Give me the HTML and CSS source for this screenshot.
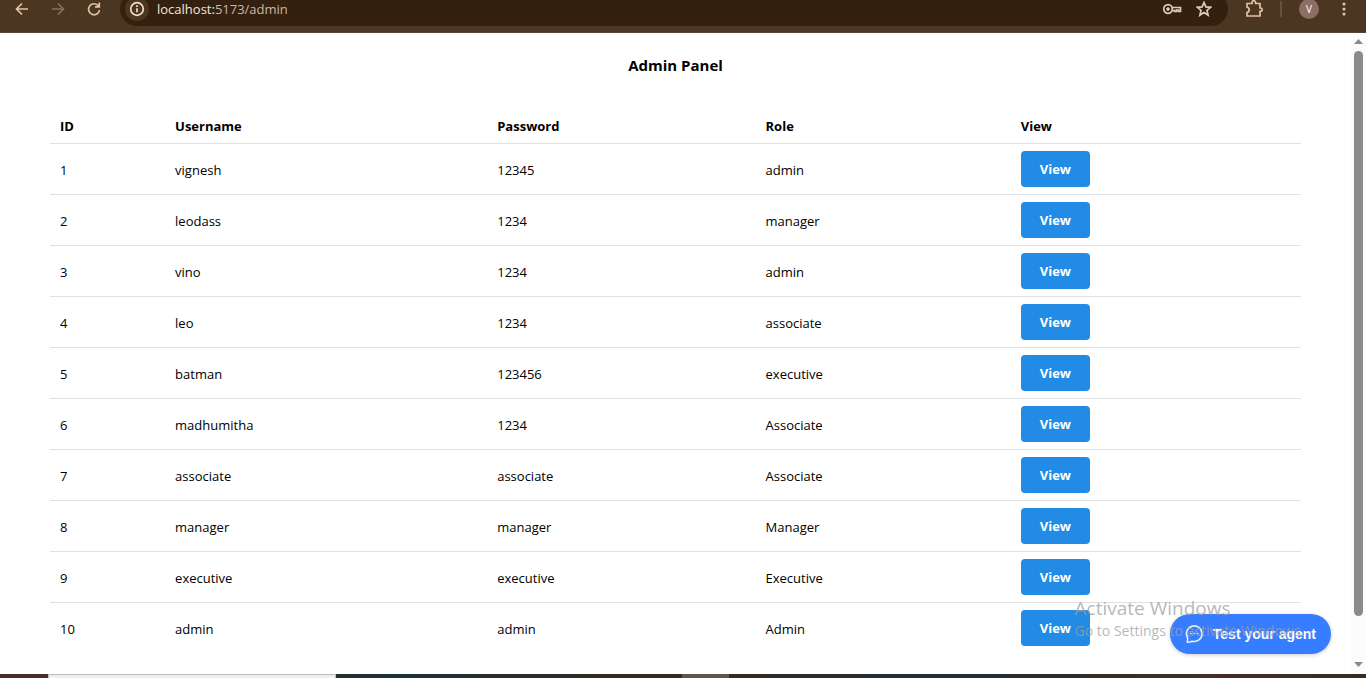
FILE: index.html
```html
<!DOCTYPE html>
<html lang="en">
<head>
<meta charset="utf-8">
<title>Admin Panel</title>
<link rel="stylesheet" href="styles.css">
</head>
<body>
<header class="toolbar">
  <nav class="nav">
    <button class="tool" aria-label="Back"><svg width="16" height="16" viewBox="0 0 16 16"><path d="M14 8H3M8 2.500 2.500 8 8 13.500"/></svg></button>
    <button class="tool dim" aria-label="Forward"><svg width="16" height="16" viewBox="0 0 16 16"><path d="M2 8h11M8 2.500 13.500 8 8 13.500"/></svg></button>
    <button class="tool" aria-label="Reload"><svg width="16" height="16" viewBox="0 0 16 16"><path d="M12.500 5A5.500 5.500 0 1 0 13.500 9M13.300 1.500v4.300H9"/></svg></button>
  </nav>
  <div class="omnibox">
    <button class="info" aria-label="Site information"><svg width="16" height="16" viewBox="0 0 16 16"><circle cx="8" cy="8" r="6.300"/><path d="M8 7.200v4M8 4.300v1.700"/></svg></button>
    <div class="url"><span class="host">localhost:</span>5173/admin</div>
    <button class="tool light" aria-label="Passwords"><svg width="20" height="16" viewBox="0 0 20 16"><circle cx="6" cy="8" r="4.300"/><circle cx="6" cy="8" r="1" fill="currentColor"/><path d="M10 6.500h8.500v4h-2v-1.500h-2v1.500h-2V9.500h-2.500"/></svg></button>
    <button class="tool light" aria-label="Bookmark"><svg width="16" height="16" viewBox="0 0 16 16"><path d="m8 1.500 1.900 4.400 4.700.4-3.600 3.100 1.100 4.700L8 11.600l-4.100 2.500L5 9.400 1.400 6.300l4.700-.4z"/></svg></button>
  </div>
  <div class="actions">
    <button class="tool" aria-label="Extensions"><svg width="18" height="18" viewBox="0 0 18 18"><path d="M2 3.500h5V2.500a1.800 1.800 0 0 1 3.600 0v1h4.400v4.500h.5a1.700 1.700 0 0 1 0 3.400H15V16H2v-3.500c2.800-.6 2.800-4.900 0-5.500z"/></svg></button>
    <span class="divider"></span>
    <button class="avatar" aria-label="Profile">V</button>
    <button class="tool" aria-label="Menu"><svg width="16" height="16" viewBox="0 0 16 16"><g class="dots"><circle cx="8" cy="3" r="1.600"/><circle cx="8" cy="8" r="1.600"/><circle cx="8" cy="13" r="1.600"/></g></svg></button>
  </div>
</header>
<div class="viewport">
  <main class="page">
    <h1 class="title">Admin Panel</h1>
    <table class="users">
      <colgroup><col class="c-id"><col class="c-user"><col class="c-pass"><col class="c-role"><col></colgroup>
      <thead><tr><th>ID</th><th>Username</th><th>Password</th><th>Role</th><th>View</th></tr></thead>
      <tbody>
        <tr><td>1</td><td>vignesh</td><td>12345</td><td>admin</td><td class="action"><button class="view">View</button></td></tr>
        <tr><td>2</td><td>leodass</td><td>1234</td><td>manager</td><td class="action"><button class="view">View</button></td></tr>
        <tr><td>3</td><td>vino</td><td>1234</td><td>admin</td><td class="action"><button class="view">View</button></td></tr>
        <tr><td>4</td><td>leo</td><td>1234</td><td>associate</td><td class="action"><button class="view">View</button></td></tr>
        <tr><td>5</td><td>batman</td><td>123456</td><td>executive</td><td class="action"><button class="view">View</button></td></tr>
        <tr><td>6</td><td>madhumitha</td><td>1234</td><td>Associate</td><td class="action"><button class="view">View</button></td></tr>
        <tr><td>7</td><td>associate</td><td>associate</td><td>Associate</td><td class="action"><button class="view">View</button></td></tr>
        <tr><td>8</td><td>manager</td><td>manager</td><td>Manager</td><td class="action"><button class="view">View</button></td></tr>
        <tr><td>9</td><td>executive</td><td>executive</td><td>Executive</td><td class="action"><button class="view">View</button></td></tr>
        <tr><td>10</td><td>admin</td><td>admin</td><td>Admin</td><td class="action"><button class="view">View</button></td></tr>
      </tbody>
    </table>
  </main>
  <div class="scrollbar">
    <svg width="9" height="5" viewBox="0 0 9 5"><path d="M4.500 0 9 5H0z"/></svg>
    <div class="track"><div class="thumb"></div></div>
    <svg width="9" height="5" viewBox="0 0 9 5"><path d="M0 0h9L4.500 5z"/></svg>
  </div>
  <button class="agent"><svg width="20" height="20" viewBox="0 0 20 20"><path d="M3.300 18.300 3.700 14A7.800 7.800 0 1 1 8 17.200q-2 .9-4.700 1.100z"/><path d="M6.800 9.500h.1M10.300 9.500h.1M13.800 9.500h.1"/></svg>Test your agent</button>
  <div class="watermark"><p class="mark-title">Activate Windows</p><p class="mark-text">Go to Settings to activate Windows.</p></div>
</div>
<footer class="taskbar"><span class="task-start"></span><span class="search"></span><span class="tasks"></span><span class="active"></span><span class="tray"></span></footer>
</body>
</html>
```
FILE: styles.css
```css
* { box-sizing: border-box; }
body {
  margin: 0;
  height: 100vh;
  display: flex;
  flex-direction: column;
  overflow: hidden;
  background: #fff;
  color: #000;
  font: 13px/21px "Open Sans", "Noto Sans", sans-serif;
}
button {
  border: 0;
  padding: 0;
  background: none;
  color: inherit;
  font: inherit;
  cursor: pointer;
}
svg { display: block; }

.toolbar {
  flex: none;
  height: 33px;
  display: flex;
  align-items: flex-end;
  padding: 0 14px 6px;
  background: #4b3621;
  border-bottom: 1px solid #594634;
  overflow: hidden;
  color: #e4c1a3;
}
.toolbar svg { fill: none; stroke: currentColor; stroke-width: 1.7; }
.toolbar .dots { fill: currentColor; stroke: none; }
.nav, .actions, .omnibox { display: flex; align-items: center; height: 34px; flex: none; }
.nav { gap: 20px; padding-right: 18px; }
.dim { color: #88705a; }
.light { color: #dccbbd; }
.omnibox {
  flex: 1;
  gap: 14px;
  padding: 0 16px 0 5px;
  border-radius: 17px;
  background: #34200f;
}
.info {
  width: 24px;
  height: 24px;
  display: grid;
  place-items: center;
  border-radius: 50%;
  background: #4b3621;
  color: #f0ddcc;
}
.url { flex: 1; margin-left: -6px; color: #cbb7a6; }
.host { color: #f5e6d8; }
.actions { gap: 17px; padding-left: 17px; }
.divider { width: 2px; height: 16px; background: #6a5039; }
.avatar {
  width: 20px;
  height: 20px;
  border-radius: 50%;
  background: #8d6e63;
  color: #fff;
  font-size: 10px;
  line-height: 20px;
}

.viewport { flex: 1; min-height: 0; display: flex; position: relative; }
.page { flex: 1; padding: 22px 50px 0; overflow: hidden; }
.title { margin: 0 0 32px; text-align: center; font-size: 15px; line-height: 21px; font-weight: 700; }
.users { width: 100%; table-layout: fixed; border-collapse: separate; border-spacing: 0; }
.c-id { width: 9.2%; }
.c-user { width: 25.75%; }
.c-pass { width: 21.45%; }
.c-role { width: 20.4%; }
.users th, .users td {
  padding: 8px 10px 6px;
  text-align: left;
  vertical-align: middle;
  border-bottom: 1px solid #dee2e6;
}
.users th { font-weight: 700; }
.users .action { padding: 7px 10px; }
.users tbody tr:last-child td { border-bottom: 0; }
.view {
  display: block;
  height: 36px;
  padding: 0 19px;
  border-radius: 4px;
  background: #228be6;
  color: #fff;
  font-weight: 700;
}

.scrollbar {
  flex: none;
  width: 15px;
  display: flex;
  flex-direction: column;
  align-items: center;
  gap: 7px;
  padding: 6px 0 7px;
  background: #fcfcfc;
}
.scrollbar svg { fill: #8b8b8b; }
.track { flex: 1; width: 9px; }
.thumb { height: 93.5%; border-radius: 5px; background: #8b8b8b; }

.agent {
  position: absolute;
  right: 35px;
  bottom: 20px;
  height: 40px;
  display: flex;
  align-items: center;
  gap: 9px;
  padding: 0 15px 0 14px;
  border-radius: 20px;
  background: #377dff;
  box-shadow: 0 1px 4px rgba(0, 0, 0, .2);
  color: #fff;
  font: 700 14px/20px "Liberation Sans", Arial, sans-serif;
}
.agent svg { fill: none; stroke: #e6eeff; stroke-width: 1.6; stroke-linecap: round; stroke-linejoin: round; }
.watermark {
  position: absolute;
  right: 62px;
  bottom: 33px;
  color: rgba(160, 160, 160, .75);
  pointer-events: none;
}
.watermark p { margin: 0; }
.mark-title { font-size: 19px; line-height: 26px; }
.mark-text { font-size: 14px; line-height: 20px; }

.taskbar { flex: none; height: 4px; display: flex; background: #2c2b29; }
.task-start { width: 3.5%; background: #442e27; }
.search { width: 21.1%; background: #f0eff0; border: 1px solid #bcbcbc; border-bottom: 0; }
.tasks { width: 25.3%; background: linear-gradient(90deg, #22302f, #1b303b 20%, #2b2b2a 50%, #38291d); }
.active { width: 3.5%; background: #62544a; }
.tray { flex: 1; background: linear-gradient(90deg, #38291d, #2c2b29 10%, #1f303c 35%, #2d2b28 50%, #442e27 75%, #3b2a1e); }
```
